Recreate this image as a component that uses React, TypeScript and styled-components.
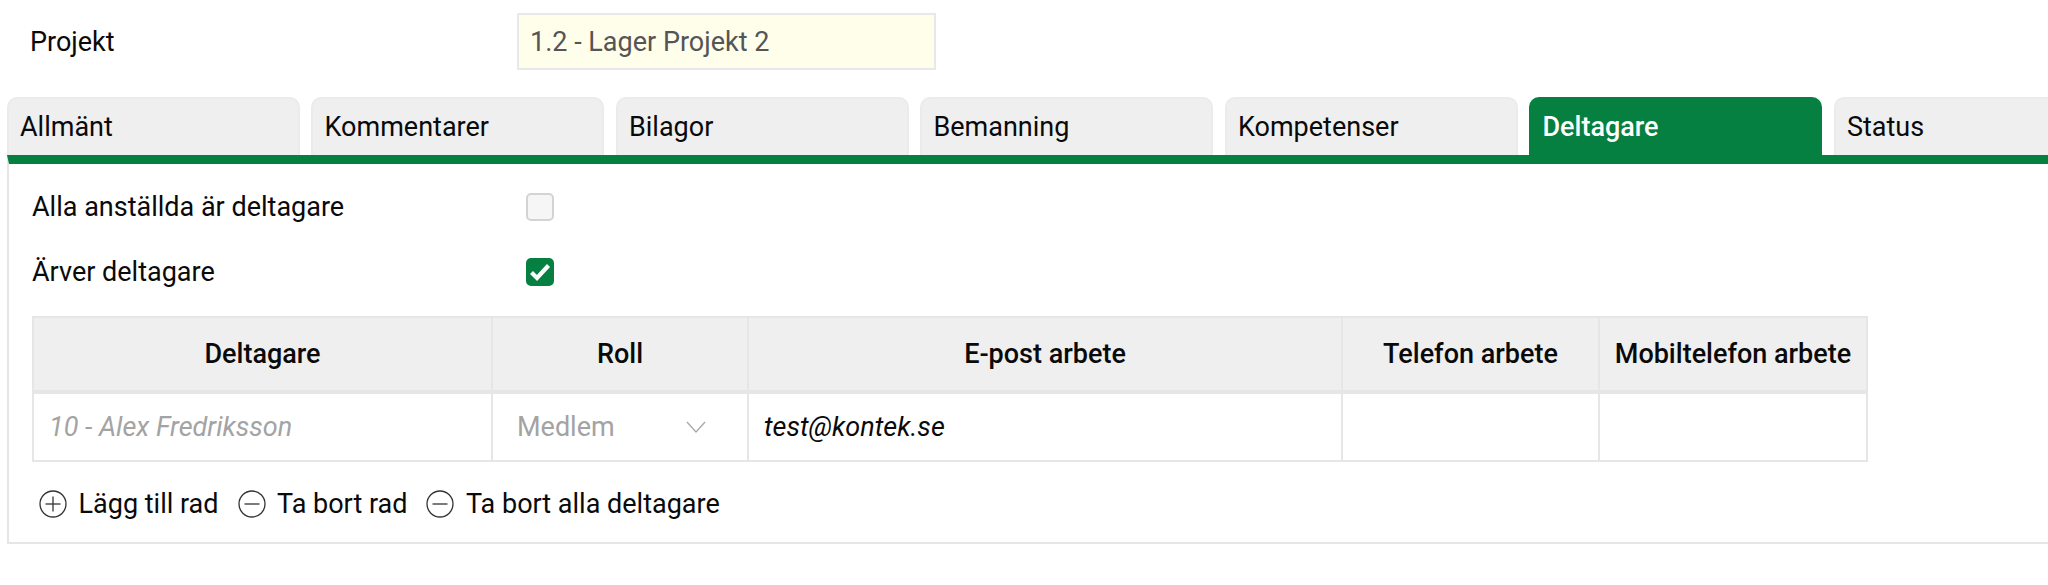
import React from "react";
import styled, { createGlobalStyle } from "styled-components";

const Global = createGlobalStyle`
  html, body { margin: 0; padding: 0; background: #fff; }
  body { font-family: Roboto, "Liberation Sans", sans-serif; color: #0a0a0a; font-size: 27px; }
`;

const Page = styled.div`
  width: 2048px;
  height: 585px;
  padding: 13px 0 0 7px;
  box-sizing: border-box;
  overflow: hidden;
`;

const ProjectRow = styled.div`
  display: flex;
  align-items: center;
  height: 57px;
  margin-bottom: 27px;
`;

const ProjectLabel = styled.div`
  width: 510px;
  padding-left: 23px;
  box-sizing: border-box;
`;

const ProjectValue = styled.div`
  width: 419px;
  height: 57px;
  box-sizing: border-box;
  padding-left: 11px;
  display: flex;
  align-items: center;
  background: #fefeeb;
  border: 2px solid #e8e8e8;
  color: #555;
`;

const Tabs = styled.div`
  display: flex;
  gap: 11.8px;
  height: 58px;
  width: 2100px;
`;

const Tab = styled.div<{ $active?: boolean }>`
  flex: 0 0 292.7px;
  box-sizing: border-box;
  padding: 0 0 0 11px;
  display: flex;
  align-items: center;
  border-radius: 10px 10px 0 0;
  border: 2px solid ${(p) => (p.$active ? "#068041" : "#ebebeb")};
  border-bottom: none;
  background: ${(p) => (p.$active ? "#068041" : "#efefef")};
  color: ${(p) => (p.$active ? "#fff" : "#0a0a0a")};
  font-weight: ${(p) => (p.$active ? 500 : 400)};
`;

const Panel = styled.div`
  height: 389px;
  box-sizing: border-box;
  border-top: 9px solid #068041;
  border-left: 2px solid #e6e6e6;
  border-bottom: 2px solid #e6e6e6;
  padding: 29px 0 0 23px;
`;

const Fields = styled.div`
  display: flex;
  flex-direction: column;
  gap: 37px;
`;

const FieldRow = styled.div`
  display: flex;
  align-items: center;
  height: 28px;
`;

const FieldLabel = styled.div`
  width: 494px;
`;

const Check = styled.div<{ $checked?: boolean }>`
  width: 28px;
  height: 28px;
  box-sizing: border-box;
  border-radius: 5px;
  display: flex;
  align-items: center;
  justify-content: center;
  border: 2px solid ${(p) => (p.$checked ? "#068041" : "#d4d4d4")};
  background: ${(p) => (p.$checked ? "#068041" : "#f6f6f6")};
`;

const Table = styled.div`
  width: 1836px;
  margin-top: 30px;
  box-sizing: border-box;
  border: 2px solid #e6e6e6;
`;

const Row = styled.div<{ $head?: boolean }>`
  display: grid;
  grid-template-columns: 459px 256px 594px 257px 266px;
  height: ${(p) => (p.$head ? "72px" : "66px")};
  background: ${(p) => (p.$head ? "#efefef" : "#fff")};
  border-bottom: ${(p) => (p.$head ? "4px solid #e6e6e6" : "none")};
  box-sizing: content-box;
`;

const HeadCell = styled.div`
  display: flex;
  align-items: center;
  justify-content: center;
  font-weight: 500;
  white-space: nowrap;
  border-right: 2px solid #e6e6e6;
  &:last-child { border-right: none; }
`;

const Cell = styled.div<{ $muted?: boolean }>`
  display: flex;
  align-items: center;
  justify-content: space-between;
  padding: 0 15px;
  box-sizing: border-box;
  font-style: italic;
  color: ${(p) => (p.$muted ? "#a3a3a3" : "#0a0a0a")};
  border-right: 2px solid #e6e6e6;
  &:last-child { border-right: none; }
`;

const SelectCell = styled(Cell)`
  font-style: normal;
  padding: 0 41px 0 24px;
`;

const Actions = styled.div`
  display: flex;
  align-items: center;
  margin-top: 26px;
  padding-left: 7px;
  gap: 19px;
`;

const Action = styled.div`
  display: flex;
  align-items: center;
  gap: 11.5px;
`;

const CircleIcon = ({ plus }: { plus?: boolean }) => (
  <svg width="28" height="28" viewBox="0 0 28 28" fill="none" stroke="#333" strokeWidth="1.3">
    <circle cx="14" cy="14" r="13" />
    <path d="M6.5 14h15" />
    {plus && <path d="M14 6.5v15" />}
  </svg>
);

export default function App() {
  const tabs = ["Allmänt", "Kommentarer", "Bilagor", "Bemanning", "Kompetenser", "Deltagare", "Status"];
  return (
    <Page>
      <Global />
      <ProjectRow>
        <ProjectLabel>Projekt</ProjectLabel>
        <ProjectValue>1.2 - Lager Projekt 2</ProjectValue>
      </ProjectRow>
      <Tabs>
        {tabs.map((t) => (
          <Tab key={t} $active={t === "Deltagare"}>{t}</Tab>
        ))}
      </Tabs>
      <Panel>
        <Fields>
          <FieldRow>
            <FieldLabel>Alla anställda är deltagare</FieldLabel>
            <Check />
          </FieldRow>
          <FieldRow>
            <FieldLabel>Ärver deltagare</FieldLabel>
            <Check $checked>
              <svg width="22" height="20" viewBox="0 0 22 20" fill="none" stroke="#fff" strokeWidth="4.2">
                <path d="M2.5 10.5l5.5 5.5L19.5 3.5" />
              </svg>
            </Check>
          </FieldRow>
        </Fields>
        <Table>
          <Row $head>
            <HeadCell>Deltagare</HeadCell>
            <HeadCell>Roll</HeadCell>
            <HeadCell>E-post arbete</HeadCell>
            <HeadCell>Telefon arbete</HeadCell>
            <HeadCell>Mobiltelefon arbete</HeadCell>
          </Row>
          <Row>
            <Cell $muted>10 - Alex Fredriksson</Cell>
            <SelectCell $muted>
              Medlem
              <svg width="20" height="12" viewBox="0 0 20 12" fill="none" stroke="#a8a8a8" strokeWidth="1.3">
                <path d="M1 1l9 10 9-10" />
              </svg>
            </SelectCell>
            <Cell>test@kontek.se</Cell>
            <Cell />
            <Cell />
          </Row>
        </Table>
        <Actions>
          <Action><CircleIcon plus />Lägg till rad</Action>
          <Action><CircleIcon />Ta bort rad</Action>
          <Action><CircleIcon />Ta bort alla deltagare</Action>
        </Actions>
      </Panel>
    </Page>
  );
}
